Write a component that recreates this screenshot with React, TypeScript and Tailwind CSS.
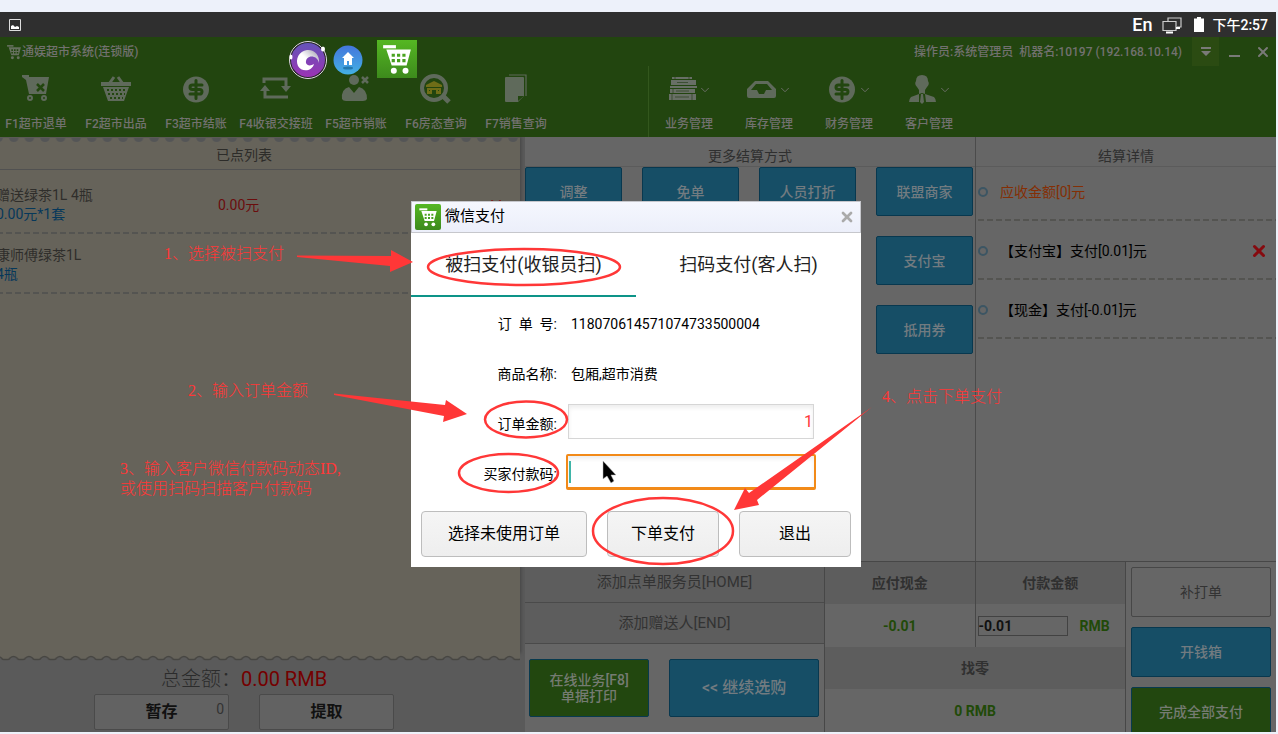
import { useId } from "react";
import type { ReactNode } from "react";
import { ChevronDown, X } from "lucide-react";

const CartGlyph = ({ className }: { className?: string }) => (
  <svg viewBox="0 0 30 30" className={className} fill="currentColor" aria-hidden>
    <path d="M2 2h12v3H2z" />
    <path
      fillRule="evenodd"
      d="M5 6h23l-4 15H10zM10 10v3h3v-3zm5 0v3h3v-3zm5 0v3h3v-3zM10 15v3h3v-3zm5 0v3h3v-3zm5 0v3h3v-3z"
    />
    <circle cx="12" cy="26" r="2.800" />
    <circle cx="23" cy="26" r="2.800" />
  </svg>
);

const DollarIcon = () => (
  <svg viewBox="0 0 32 32" className="size-8" aria-hidden>
    <circle cx="16" cy="15.500" r="13" fill="#5f6a5b" />
    <path
      d="M22 11h-9.500q-2.500 0-2.500 2.200t2.500 2.300h7q2.500 0 2.500 2.300t-2.500 2.200H10M16 6.500v18"
      fill="none"
      stroke="#22460f"
      strokeWidth="3"
      strokeLinecap="round"
      strokeLinejoin="round"
    />
  </svg>
);

const TOOLS: { label: string; icon: ReactNode }[] = [
  {
    label: "F1超市退单",
    icon: (
      <svg viewBox="0 0 32 32" className="size-8" aria-hidden>
        <path d="M2 1h7v2h20l-3 17H9L6 6 2 3z" fill="#5f6a5b" />
        <path d="m17 10 7 7m0-7-7 7" stroke="#22460f" strokeWidth="2.500" />
        <circle cx="10" cy="24" r="2" fill="none" stroke="#5f6a5b" strokeWidth="2" />
        <circle cx="24" cy="24" r="2" fill="none" stroke="#5f6a5b" strokeWidth="2" />
      </svg>
    ),
  },
  {
    label: "F2超市出品",
    icon: (
      <svg viewBox="0 0 32 32" className="size-8" aria-hidden>
        <path d="m9 10 5-7m9 7-5-7" stroke="#5f6a5b" strokeWidth="3" />
        <path d="M1 8h30v4H1zM3 13h26l-5 14H8z" fill="#5f6a5b" />
        <path d="M7 16h19M8 20h17M10 24h13" stroke="#22460f" strokeWidth="2" strokeDasharray="2 2" />
      </svg>
    ),
  },
  { label: "F3超市结账", icon: <DollarIcon /> },
  {
    label: "F4收银交接班",
    icon: (
      <svg viewBox="0 0 32 32" className="size-8" aria-hidden>
        <path d="M4 9V5h22v9M28 23H5v-8" fill="none" stroke="#5f6a5b" strokeWidth="3" />
        <path d="M21 12h10l-5 6zM0 17h10l-5-6z" fill="#5f6a5b" />
      </svg>
    ),
  },
  {
    label: "F5超市销账",
    icon: (
      <svg viewBox="0 0 32 32" className="size-8" aria-hidden>
        <circle cx="14" cy="6" r="5" fill="#5f6a5b" />
        <path d="M2 25q-1-10 7-12l5 6 5-6q8 2 8 12-1 2-4 2H6q-3 0-4-2z" fill="#5f6a5b" />
        <path d="m22 3 6 6m0-6-6 6" stroke="#5f6a5b" strokeWidth="2.500" />
      </svg>
    ),
  },
  {
    label: "F6房态查询",
    icon: (
      <svg viewBox="0 0 32 32" className="size-8" aria-hidden>
        <circle cx="14" cy="14" r="12" fill="none" stroke="#5f6a5b" strokeWidth="4" />
        <path d="m22 21 7 7" stroke="#5f6a5b" strokeWidth="5" />
        <path
          fillRule="evenodd"
          d="m14 7 8 4v2H6v-2zM7 14h14v6h-5v-4h-4v4H7zm2 2v1h1v-1zm9 0v1h1v-1z"
          fill="#6f6d17"
        />
      </svg>
    ),
  },
  {
    label: "F7销售查询",
    icon: (
      <svg viewBox="0 0 32 32" className="size-8" aria-hidden>
        <path d="M9 1h17v21" fill="none" stroke="#5f6a5b" strokeWidth="1.200" />
        <path d="M6 3h17a1 1 0 0 1 1 1v18l-6 6H6a1 1 0 0 1-1-1V4a1 1 0 0 1 1-1z" fill="#5f6a5b" />
        <path d="M18 27v-5h6z" fill="#22460f" />
      </svg>
    ),
  },
];

const MENUS: { label: string; icon: ReactNode }[] = [
  {
    label: "业务管理",
    icon: (
      <svg viewBox="0 0 32 32" className="size-8" aria-hidden>
        <path d="M6 3h20v2H6zM5 6h25v5H5zM4 12h27v2H4zM4 15h25v4H4zM3 20h27v6H3z" fill="#686f66" />
        <path d="M11 8.500h11M10 17h13M9 23h14M6 20v6M7 15v4M26 20v6M9 3v2M23 3v2" stroke="#3c4f33" />
      </svg>
    ),
  },
  {
    label: "库存管理",
    icon: (
      <svg viewBox="0 0 32 32" className="size-8" aria-hidden>
        <path
          fillRule="evenodd"
          d="M9 7h13l8 8v7a2 2 0 0 1-2 2H3a2 2 0 0 1-2-2v-7zm1 3-5 6h6l2 4h5l2-4h6l-5-6z"
          fill="#5f6a5b"
        />
      </svg>
    ),
  },
  { label: "财务管理", icon: <DollarIcon /> },
  {
    label: "客户管理",
    icon: (
      <svg viewBox="0 0 32 32" className="size-8" aria-hidden>
        <path
          d="M16 1q6 0 6 6 2 3-1 6l-2 3v4l9 3q2 2 2 5H3q0-3 2-5l8-3v-4l-2-3q-3-3-1-6 0-6 6-6z"
          fill="#5f6a5b"
        />
        <path d="m13 20 3-1 3 1 1 8h-7z" fill="#22460f" />
        <path d="m15 20-1 8 2 2 2-2-1-8z" fill="#5f6a5b" />
      </svg>
    ),
  },
];

const ITEMS = [
  { name: "赠送绿茶1L 4瓶", qty: "0.00元*1套", price: "0.00元" },
  { name: "康师傅绿茶1L", qty: "4瓶", price: "" },
];

const PAYMENTS = [
  { text: "应收金额[0]元", due: true, removable: false },
  { text: "【支付宝】支付[0.01]元", due: false, removable: true },
  { text: "【现金】支付[-0.01]元", due: false, removable: false },
];

const StatusBar = () => (
  <div className="flex h-[25px] shrink-0 items-center bg-[#2f2f2f] px-2 text-white">
    <svg viewBox="0 0 14 14" className="size-3.5" aria-hidden>
      <path d="M1.500 1.500h11v11h-11z" fill="none" stroke="#ddd" />
      <path d="M3 11V8l2-1 2 2 2-1 2 1v2z" fill="#fff" />
    </svg>
    <span className="ml-auto text-lg font-medium leading-6">En</span>
    <svg viewBox="0 0 20 18" className="ml-2.5 h-4.5 w-5" fill="none" stroke="#ccc" aria-hidden>
      <path d="M6 5V2h13v9h-4M1 5.500h13v9H1z" strokeWidth="1.200" />
      <path d="M4 16.500h7M14 12h4" stroke="#fff" strokeWidth="2" />
    </svg>
    <svg viewBox="0 0 10 16" className="ml-3 h-4 w-2.5" fill="#fff" aria-hidden>
      <path d="M0 1.500h3V0h4v1.500h3V15H0z" />
    </svg>
    <span className="ml-2 text-sm font-medium leading-6">下午2:57</span>
  </div>
);

const FloatingIcons = () => (
  <div className="absolute left-[289px] top-0 flex items-center">
    <svg viewBox="0 0 40 46" className="h-[46px] w-10" aria-hidden>
      <defs>
        <linearGradient id="orb" x2="0" y2="1">
          <stop stopColor="#6355b8" />
          <stop offset="1" stopColor="#9c32b4" />
        </linearGradient>
        <linearGradient id="swirl" x1="1" x2="0" y2="1">
          <stop stopColor="#9c98ac" />
          <stop offset="0.500" stopColor="#fff" />
        </linearGradient>
      </defs>
      <circle cx="19" cy="23" r="18" fill="url(#orb)" stroke="#222" strokeWidth="2" />
      <circle cx="19" cy="23" r="18.500" fill="none" stroke="#ddd" />
      <path
        d="M30 26c1-8-5-14-12-13C10 14 6 22 9 29c3 6 14 6 16-2-3 2-7 2-8-1-1-8 11-9 13 0z"
        fill="url(#swirl)"
      />
      <ellipse cx="34" cy="12" rx="2" ry="2.500" fill="#fff" />
      <ellipse cx="2" cy="20" rx="1.500" ry="2.500" fill="#fff" />
    </svg>
    <svg viewBox="0 0 30 46" className="ml-1 h-[46px] w-[30px]" aria-hidden>
      <defs>
        <linearGradient id="home" x2="0" y2="1">
          <stop stopColor="#4476dc" />
          <stop offset="1" stopColor="#43b0e4" />
        </linearGradient>
      </defs>
      <circle cx="15" cy="23" r="14.500" fill="url(#home)" />
      <ellipse cx="15" cy="31" rx="5" ry="1.500" fill="#2378ad" />
      <path d="m15 15 6 6h-2v7h-3v-4h-2v4h-3v-7H9z" fill="#fff" />
    </svg>
    <span className="mb-0.5 ml-3.5 flex h-[38px] w-10 items-center justify-center bg-linear-to-b from-[#55b723] to-[#3d8a1c]">
      <CartGlyph className="size-8 text-white" />
    </span>
  </div>
);

const Header = () => (
  <header className="relative h-[100px] shrink-0 bg-[#22450f] text-xs font-medium text-[#72716f]">
    <div className="flex h-[29px] items-center pl-1.5">
      <CartGlyph className="size-4 text-[#66705f]" />
      <span>通娱超市系统(连锁版)</span>
      <span className="ml-auto whitespace-pre">操作员:系统管理员  机器名:10197 (192.168.10.14)</span>
      <button type="button" aria-label="菜单" className="ml-2.5 flex h-[29px] w-[27px] items-center justify-center bg-[#2b4b12]">
        <svg viewBox="0 0 12 10" className="h-2.5 w-3" fill="#7a7a78" aria-hidden>
          <path d="M1 0h10v2H1zM1 4h10l-5 5z" />
        </svg>
      </button>
      <button type="button" aria-label="最小化" className="flex h-[29px] w-[30px] items-center justify-center">
        <span className="mt-2 h-0.5 w-[11px] bg-[#7a7a78]" />
      </button>
      <button type="button" aria-label="关闭" className="flex h-[29px] w-[27px] items-center justify-center">
        <X className="size-4 text-[#7a7a78]" strokeWidth={3} />
      </button>
    </div>

    <div className="flex h-[71px]">
      <nav className="-ml-1 flex">
        {TOOLS.map((tool) => (
          <button key={tool.label} type="button" className="flex w-20 flex-col items-center pt-2 whitespace-nowrap">
            {tool.icon}
            <span className="mt-2.5 leading-4">{tool.label}</span>
          </button>
        ))}
      </nav>
      <nav className="ml-[92px] flex border-l border-[#33571d]">
        {MENUS.map((menu) => (
          <button key={menu.label} type="button" className="flex w-20 flex-col items-center pt-2">
            <span className="flex items-center">
              {menu.icon}
              <ChevronDown className="size-3.5" strokeWidth={1.5} />
            </span>
            <span className="mt-2.5 leading-4">{menu.label}</span>
          </button>
        ))}
      </nav>
    </div>

    <FloatingIcons />
  </header>
);

// Torn receipt edge, repeated along the full width
const Scallop = () => {
  const id = useId();
  return (
    <svg className="block h-2 w-full" aria-hidden>
      <defs>
        <pattern id={id} x="6" width="15.500" height="8" patternUnits="userSpaceOnUse">
          <path d="M0 0h15.500v6H13q-1 0-2-1.500-3.500-3-7 0Q3 6 2 6H0z" fill="#66635a" />
          <path
            d="M0 6.500h2q1 0 2-1.500 3.500-3 7 0 1 1.500 2 1.500h2.500"
            fill="none"
            stroke="#474642"
            strokeWidth="1.500"
          />
        </pattern>
      </defs>
      <rect width="100%" height="8" fill={`url(#${id})`} />
    </svg>
  );
};

const Perforation = () => {
  const id = useId();
  return (
    <svg className="block h-[5px] w-full" aria-hidden>
      <defs>
        <pattern id={id} x="6" width="15.600" height="5" patternUnits="userSpaceOnUse">
          <path d="M3 1h9.500q-.5 4-4.700 4T3 1z" fill="#545556" />
          <path d="M0 0h15.600v1H0z" fill="#5b5a56" />
        </pattern>
      </defs>
      <rect width="100%" height="5" fill={`url(#${id})`} />
    </svg>
  );
};

const DashedLine = () => (
  <svg className="absolute inset-x-0 bottom-0 h-0.5 w-full" aria-hidden>
    <line x1="2" y1="1" x2="100%" y2="1" stroke="#545451" strokeWidth="2" strokeDasharray="6 3" />
  </svg>
);

const OrderPanel = () => (
  <section className="flex min-w-0 flex-col overflow-hidden bg-[#5a5a5a]">
    <div className="mr-[5px] flex flex-1 flex-col bg-[#66635a] shadow-[1px_0_3px_#444]">
      <Perforation />
      <div className="-ml-8 flex flex-1 flex-col">
        <h2 className="flex h-7 items-center justify-center border-b border-[#515151] pb-0.5 text-sm text-[#2d2c29]">
          已点列表
        </h2>
        <ul className="pt-1 text-sm leading-[19px]">
          {ITEMS.map((item) => (
            <li key={item.name} className="relative flex h-[60px] items-center pl-7 pt-0.5">
              <div className="w-[222px]">
                <p className="text-[#2f2e2b]">{item.name}</p>
                <p className="text-[#06385a]">{item.qty}</p>
              </div>
              <span className="text-[#6b0d0d]">{item.price}</span>
              {item.price && (
                <button type="button" aria-label="删除" className="ml-auto mr-4 text-[#7d1616]">
                  <X className="size-4" strokeWidth={3} />
                </button>
              )}
              <DashedLine />
            </li>
          ))}
        </ul>
      </div>
    </div>
    <div className="mr-[5px]">
      <Scallop />
    </div>
    <div className="-ml-8 mr-[5px] flex h-[71px] flex-col items-center">
      <p className="mt-1 flex text-xl leading-7">
        <span className="font-light text-[#2b2b2b]">总金额：</span>
        <span className="text-[#750000]">0.00 RMB</span>
      </p>
      <div className="mt-px flex gap-[30px] text-base font-bold text-[#111]">
        <button type="button" className="relative h-9 w-[135px] rounded-xs border border-[#4a4a4a] bg-[#626262]">
          暂存
          <span className="absolute right-1 top-1 text-sm font-normal text-[#333]">0</span>
        </button>
        <button type="button" className="h-9 w-[135px] rounded-xs border border-[#4a4a4a] bg-[#626262]">
          提取
        </button>
      </div>
    </div>
  </section>
);

const METHOD_CLASS =
  "h-[49px] rounded-xs border border-[#08384f] bg-[#164e66] text-sm font-medium text-[#727b80]";

const PaymentMethods = () => (
  <section className="border-r border-[#4b4b4b]">
    <h2 className="flex h-[30px] items-center justify-center border-b border-[#5b5b5b] pt-2 text-sm text-[#2f2f2f]">
      更多结算方式
    </h2>
    <div className="mr-0.5 grid grid-cols-4 gap-5">
      <button type="button" className={METHOD_CLASS}>调整</button>
      <button type="button" className={METHOD_CLASS}>免单</button>
      <button type="button" className={METHOD_CLASS}>人员打折</button>
      <button type="button" className={METHOD_CLASS}>联盟商家</button>
      <button type="button" className={`${METHOD_CLASS} col-start-4`}>支付宝</button>
      <button type="button" className={`${METHOD_CLASS} col-start-4`}>抵用券</button>
    </div>
  </section>
);

const PaymentDetails = () => (
  <section>
    <h2 className="flex h-[30px] items-center justify-center border-b border-[#5b5b5b] pt-2 text-sm text-[#2f2f2f]">
      结算详情
    </h2>
    <ul className="-mt-[5px] text-sm">
      {PAYMENTS.map((p) => (
        <li key={p.text} className="relative flex h-[59px] items-center pl-0.5">
          <span className="size-2.5 rounded-full border-2 border-[#3c5563]" />
          <span className={p.due ? "ml-3 text-[#842f05]" : "ml-3 text-black"}>{p.text}</span>
          {p.removable && (
            <button type="button" aria-label="删除" className="ml-auto mr-2 text-[#860a0f]">
              <X className="size-[18px]" strokeWidth={4} />
            </button>
          )}
          <DashedLine />
        </li>
      ))}
    </ul>
  </section>
);

const Checkout = () => (
  <section className="grid grid-cols-[300fr_300fr_151fr] grid-rows-[170px] overflow-hidden border-t border-[#474747]">
    <div className="border-r border-[#474747]">
      <button type="button" className="block h-[41px] w-full border-b border-[#4a4a4a] bg-[#5d5d5d] text-[15px] text-[#333]">
        添加点单服务员[HOME]
      </button>
      <button type="button" className="block h-[41px] w-full border-b border-[#4a4a4a] bg-[#5d5d5d] text-[15px] text-[#333]">
        添加赠送人[END]
      </button>
      <div className="flex gap-5 pl-1 pr-[5px] pt-[15px] font-medium">
        <button type="button" className="h-[58px] flex-[4] rounded-xs border border-[#083a4f] bg-[#22470f] text-sm leading-4 text-[#757b72]">
          在线业务[F8]
          <br />
          单据打印
        </button>
        <button type="button" className="h-[58px] flex-[5] rounded-xs border border-[#08384f] bg-[#164e66] text-base text-[#727b80]">
          &lt;&lt; 继续选购
        </button>
      </div>
    </div>

    <table className="w-full table-fixed border-collapse text-center text-sm font-bold">
      <tbody>
        <tr className="h-[42px] bg-[#5d5d5d] text-[#303030]">
          <th className="border-r border-[#474747]">应付现金</th>
          <th>付款金额</th>
        </tr>
        <tr className="h-[43px] text-[#214a08]">
          <td className="border-r border-[#474747]">-0.01</td>
          <td>
            <div className="flex items-center gap-3 pl-0.5">
              <input
                aria-label="付款金额"
                defaultValue="-0.01"
                className="h-5 w-[90px] border border-[#424242] font-bold text-[#111]"
              />
              <span>RMB</span>
            </div>
          </td>
        </tr>
        <tr className="h-[42px] bg-[#5d5d5d] text-[#303030]">
          <th colSpan={2}>找零</th>
        </tr>
        <tr className="h-[43px] text-[#214a08]">
          <td colSpan={2}>0 RMB</td>
        </tr>
      </tbody>
    </table>

    <div className="flex flex-col gap-2.5 border-l border-[#474747] px-[5px] pt-[5px] text-sm font-medium">
      <button type="button" className="h-[50px] shrink-0 rounded-xs border border-[#474747] bg-[#666] font-normal text-[#333]">
        补打单
      </button>
      <button type="button" className="h-[50px] shrink-0 rounded-xs border border-[#08384f] bg-[#164e66] text-[#727b80]">
        开钱箱
      </button>
      <button type="button" className="h-[50px] shrink-0 rounded-xs border border-[#083a4f] bg-[#22470f] text-[#757b72]">
        完成全部支付
      </button>
    </div>
  </section>
);

// Arrows and rings share the dialog's box, so they stay on their targets
const GuideMarks = () => (
  <div className="pointer-events-none absolute inset-0 whitespace-nowrap font-['Liberation_Serif','Noto_Sans_CJK_SC',serif] text-base font-light leading-5 text-[#ff3737]">
    <svg viewBox="411 201 450 366" className="absolute inset-0 size-full overflow-visible" aria-hidden>
      <g fill="#ff3737">
        <path d="M297 255.500 391 256V250L413 262 390 272V266L297 257z" />
        <path d="M334 393.500 445 405 446 400 467 414 443 422 444 416 334 395z" />
        <path d="M872 407 757 500 759 505 734 510 745 488 749 493z" />
      </g>
      <g fill="none" stroke="#ff3737" strokeWidth="2.500">
        <ellipse cx="524" cy="267" rx="96" ry="18" />
        <ellipse cx="526" cy="419.500" rx="41" ry="18" />
        <ellipse cx="508.500" cy="473" rx="49.500" ry="19" />
        <ellipse cx="663" cy="531" rx="70" ry="33" />
      </g>
      <path
        d="M603 461v18l4-3 4 7 3-2-3-6h5z"
        fill="#000"
        stroke="#bbb"
        strokeWidth="0.500"
      />
    </svg>
    <span className="absolute -left-[247px] top-[43px]">1、选择被扫支付</span>
    <span className="absolute -left-[223px] top-[180px]">2、输入订单金额</span>
    <span className="absolute -left-[291px] top-[258px]">
      3、输入客户微信付款码动态ID,
      <br />
      或使用扫码扫描客户付款码
    </span>
    <span className="absolute left-[471px] top-[186px]">4、点击下单支付</span>
  </div>
);

const DIALOG_BUTTON =
  "h-[46px] rounded-sm border border-[#bdbdbd] bg-linear-to-b from-[#f5f5f5] to-[#eeeeee] text-base text-black";

const WechatPayDialog = () => (
  <div role="dialog" aria-label="微信支付" className="relative w-[450px] bg-white text-black">
    <div className="flex h-8 items-center border border-[#c6c7cc] bg-linear-to-b from-[#f5f7fe] to-[#eceffa] pl-[3px] pr-[5px]">
      <span className="flex size-[26px] items-center justify-center rounded-xs bg-linear-to-b from-[#55b723] to-[#3d8a1c]">
        <CartGlyph className="size-5 text-white" />
      </span>
      <span className="ml-1 text-[15px]">微信支付</span>
      <button type="button" aria-label="关闭" className="ml-auto text-[#aaa]">
        <X className="size-4" strokeWidth={4} />
      </button>
    </div>

    <div className="grid h-16 grid-cols-2 text-lg text-[#222]">
      <button type="button" className="border-b-2 border-[#0d9488] pt-0.5">被扫支付(收银员扫)</button>
      <button type="button" className="border-b-2 border-transparent pt-0.5">扫码支付(客人扫)</button>
    </div>

    <div className="grid auto-rows-[50px] grid-cols-[146px_250px] items-center gap-x-[9px] pt-0.5 text-sm">
      <span className="whitespace-pre text-right">订  单  号:</span>
      <span className="pl-[5px]">118070614571074733500004</span>
      <span className="text-right">商品名称:</span>
      <span className="pl-[5px]">包厢,超市消费</span>
      <label htmlFor="amount" className="text-right">订单金额:</label>
      <div className="flex h-full items-start px-0.5 pt-[5px]">
        <input
          id="amount"
          defaultValue="1"
          className="h-[35px] w-full border border-[#d6d6d6] text-right text-base text-[#ff3737] shadow-[inset_0_3px_4px_#eee]"
        />
      </div>
      <label htmlFor="code" className="text-right">买家付款码:</label>
      <div className="relative flex h-full items-start pt-[5px]">
        <input
          id="code"
          className="h-9 w-full rounded-xs border-2 border-b-3 border-[#f28a18] shadow-[inset_0_3px_4px_#eee]"
        />
        <span className="absolute left-[3px] top-3 h-[22px] w-0.5 bg-[#3fb5a8]" />
      </div>
    </div>

    <div className="flex gap-5 px-2.5 pb-2.5 pt-3">
      <button type="button" className={`${DIALOG_BUTTON} w-[166px]`}>选择未使用订单</button>
      <button type="button" className={`${DIALOG_BUTTON} flex-1`}>下单支付</button>
      <button type="button" className={`${DIALOG_BUTTON} flex-1`}>退出</button>
    </div>

    <GuideMarks />
  </div>
);

export default function App() {
  return (
    <div className="flex h-screen flex-col overflow-hidden bg-[#edf1fa] pb-0.5 pr-0.5 pt-3 font-['Roboto','Noto_Sans_CJK_SC',sans-serif]">
      <StatusBar />
      <div className="relative flex min-h-0 flex-1 flex-col">
        <Header />
        <main className="grid min-h-0 flex-1 grid-cols-[525fr_751fr] bg-[#666]">
          <OrderPanel />
          <div className="flex min-w-0 flex-col">
            <div className="grid min-h-0 flex-1 grid-cols-[451fr_300fr]">
              <PaymentMethods />
              <PaymentDetails />
            </div>
            <Checkout />
          </div>
        </main>
        <div className="absolute inset-0 flex items-center justify-center pb-0.5 pr-1">
          <WechatPayDialog />
        </div>
      </div>
    </div>
  );
}
